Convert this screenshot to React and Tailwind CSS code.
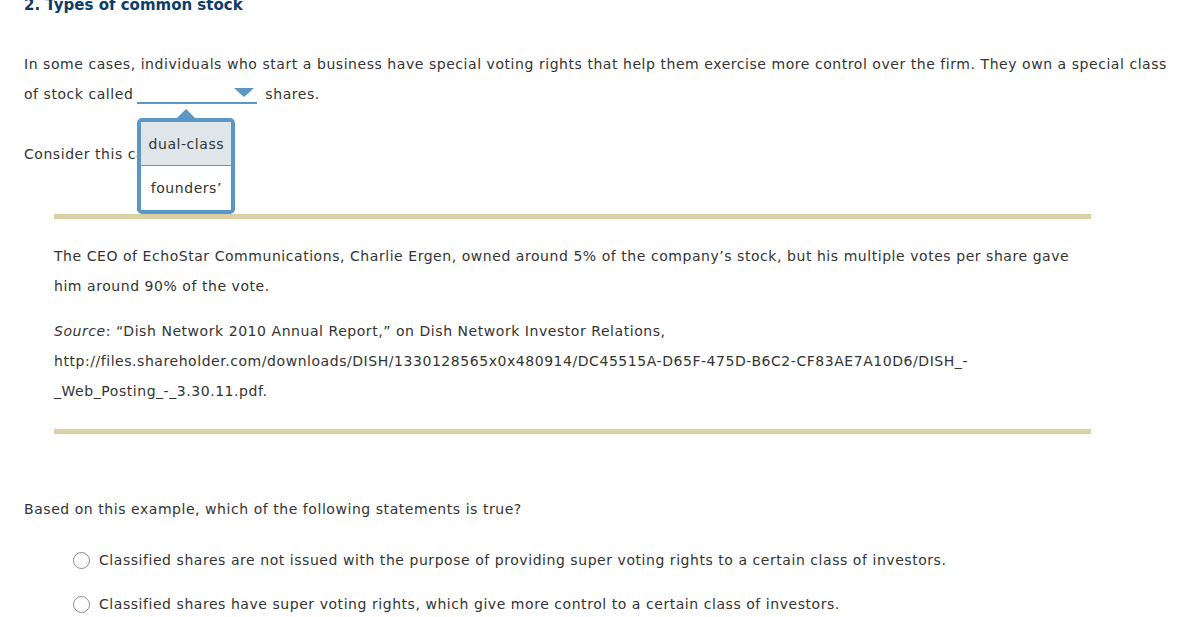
import React from 'react';

const font = { fontFamily: '"DejaVu Sans", Verdana, sans-serif' };

function Dropdown() {
  return (
    <span className="relative inline-block w-[120px] h-[22px] border-b-2 border-[#5a96c8] align-[-5px] ml-[4px] mr-[8px]">
      {/* caret */}
      <span className="absolute right-[3px] top-[6px] w-0 h-0 border-l-[10px] border-r-[10px] border-t-[9px] border-l-transparent border-r-transparent border-t-[#5a96c8]" />
      {/* open list */}
      <div className="absolute left-0 top-[36px] z-10 w-[98px]">
        <span className="absolute left-[40px] top-[-9px] w-0 h-0 border-l-[9px] border-r-[9px] border-b-[9px] border-l-transparent border-r-transparent border-b-[#5a96c8]" />
        <div className="border-4 border-[#5a96c8] rounded-[5px] bg-white overflow-hidden">
          <div className="h-[44px] flex items-center justify-center bg-[#dee6ea] border-b border-[#5a96c8] text-[#333]">
            dual-class
          </div>
          <div className="h-[44px] flex items-center justify-center text-[#333]">
            founders’
          </div>
        </div>
      </div>
    </span>
  );
}

function Radio({ children }) {
  return (
    <label className="flex items-center h-[30px]">
      <span className="w-[17px] h-[17px] rounded-full border border-[#8a8a8a] bg-white mr-[9px]" />
      <span>{children}</span>
    </label>
  );
}

export default function App() {
  return (
    <div className="bg-white w-[1177px] h-[617px] overflow-hidden text-[14px] tracking-[0.55px] text-[#333] leading-[30px]" style={font}>
      <div className="pl-[24px] pr-[4px]">
        <h2 className="mt-[-5px] text-[15px] font-bold tracking-normal text-[#0b3c6c] leading-[20px]">2. Types of common stock</h2>

        <p className="mt-[34px]">
          In some cases, individuals who start a business have special voting rights that help them exercise more control over the firm. They own a special class of stock called
          <Dropdown />
          shares.
        </p>

        <p className="mt-[30px]">Consider this case:</p>

        <div className="mt-[45px] ml-[30px] w-[1037px]">
          <div className="h-[5px] bg-[#dbd0a4]" />
          <p className="mt-[22px] pr-[10px]">
            The CEO of EchoStar Communications, Charlie Ergen, owned around 5% of the company’s stock, but his multiple votes per share gave him around 90% of the vote.
          </p>
          <p className="mt-[15px]">
            <i>Source</i>: “Dish Network 2010 Annual Report,” on Dish Network Investor Relations,
            <br />
            http://files.shareholder.com/downloads/DISH/1330128565x0x480914/DC45515A-D65F-475D-B6C2-CF83AE7A10D6/DISH_-
            <br />
            _Web_Posting_-_3.30.11.pdf.
          </p>
          <div className="mt-[23px] h-[5px] bg-[#dbd0a4]" />
        </div>

        <p className="mt-[60px]">Based on this example, which of the following statements is true?</p>

        <div className="mt-[21px] ml-[49px] flex flex-col gap-[14px]">
          <Radio>Classified shares are not issued with the purpose of providing super voting rights to a certain class of investors.</Radio>
          <Radio>Classified shares have super voting rights, which give more control to a certain class of investors.</Radio>
        </div>
      </div>
    </div>
  );
}
